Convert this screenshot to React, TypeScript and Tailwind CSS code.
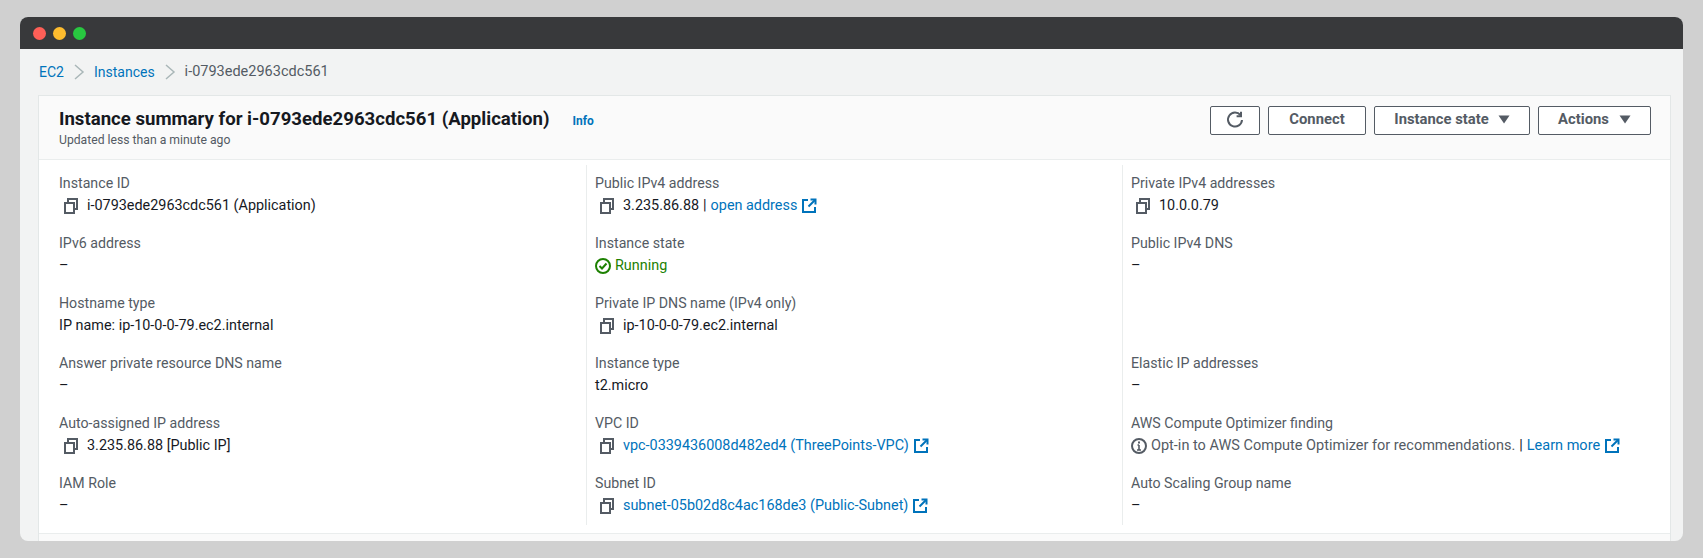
import React from "react";

const CopyIcon = () => (
  <svg width="16" height="16" viewBox="0 0 16 16" fill="none" stroke="#545b64" strokeWidth="2" className="shrink-0">
    <rect x="2" y="5" width="9" height="10" />
    <path d="M5 5V1h9v10h-3" />
  </svg>
);

const ExternalIcon = () => (
  <svg width="16" height="16" viewBox="0 0 16 16" fill="none" stroke="#0073bb" strokeWidth="2" className="ml-[4px] inline-block shrink-0">
    <path d="M7 2H2v12h12V9" />
    <path d="M9.5 1.5h5v5" />
    <path d="M14 2L7.5 8.5" />
  </svg>
);

const CheckCircle = () => (
  <svg width="16" height="16" viewBox="0 0 16 16" fill="none" stroke="#1d8102" strokeWidth="2" className="shrink-0">
    <circle cx="8" cy="8" r="7" />
    <path d="M4.5 8l2.5 2.5 4.5-5" />
  </svg>
);

const InfoCircle = () => (
  <svg width="16" height="16" viewBox="0 0 16 16" fill="none" stroke="#545b64" strokeWidth="2" className="shrink-0">
    <circle cx="8" cy="8" r="7" />
    <path d="M8 7v5M6 12h4M6.5 7H8" strokeWidth="1.6" />
    <path d="M8 3.4v2" />
  </svg>
);

const Chevron = () => (
  <svg width="12" height="18" viewBox="0 0 12 18" fill="none" stroke="#aab7b8" strokeWidth="1.5" className="shrink-0">
    <path d="M2 2l8 7-8 7" />
  </svg>
);

const Caret = () => (
  <svg width="12" height="9" viewBox="0 0 12 9" fill="#545b64" className="shrink-0">
    <path d="M0.5 0.5h11L6 8.5z" />
  </svg>
);

const RefreshIcon = () => (
  <svg width="18" height="18" viewBox="0 0 18 18" fill="none" stroke="#545b64" strokeWidth="2">
    <path d="M14.5 4.2A7 7 0 1 0 16 9" />
    <path d="M15 0.8v4.4h-4.4" />
  </svg>
);

const Link = ({ children }: { children: React.ReactNode }) => (
  <span className="text-[#0073bb]">{children}</span>
);

const CopyValue = ({ children }: { children: React.ReactNode }) => (
  <div className="flex items-center pl-[4px] text-[14.4px] text-[#16191f]">
    <CopyIcon />
    <span className="ml-[8px] flex items-center whitespace-nowrap">{children}</span>
  </div>
);

interface FieldProps {
  label?: string;
  children?: React.ReactNode;
}

const Field = ({ label, children }: FieldProps) => (
  <div className="h-[44px] leading-[22px]">
    {label && <div className="h-[22px] text-[14.2px] leading-[20px] text-[#545b64]">{label}</div>}
    {children}
  </div>
);

const Dash = () => <div className="text-[#16191f]">–</div>;

const Button = ({ children, className }: { children: React.ReactNode; className: string }) => (
  <button className={`flex h-[29px] items-center justify-center rounded-[2px] border border-[#545b64] bg-white pb-[2px] text-[14.8px] font-bold text-[#545b64] ${className}`}>
    {children}
  </button>
);

export default function App() {
  return (
    <div className="h-screen overflow-hidden bg-[#d0d0d0] pt-[17px] pl-[20px] pr-[20px] font-['Roboto',sans-serif] text-[14.4px]">
      <div className="flex h-[524px] flex-col overflow-hidden rounded-[8px] bg-[#f2f3f3]">
        <div className="flex h-[32px] shrink-0 items-center gap-[7px] bg-[#38393b] pl-[13px]">
          <span className="h-[13px] w-[13px] rounded-full bg-[#fe5f57]" />
          <span className="h-[13px] w-[13px] rounded-full bg-[#febc2e]" />
          <span className="h-[13px] w-[13px] rounded-full bg-[#28c840]" />
        </div>

        <div className="flex h-[46px] shrink-0 items-center pl-[19px] text-[#545b64]">
          <span className="text-[14px]"><Link>EC2</Link></span>
          <span className="mx-[9px]"><Chevron /></span>
          <span className="text-[14px]"><Link>Instances</Link></span>
          <span className="mx-[9px]"><Chevron /></span>
          <span className="text-[14.5px]">i-0793ede2963cdc561</span>
        </div>

        <div className="ml-[18px] mr-[12px] flex-1 border-x border-t border-[#e3e7e7] bg-white">
          <div className="flex h-[64px] items-start justify-between border-b border-[#eaeded] bg-[#fafafa] pl-[20px] pr-[19px]">
            <div className="pt-[11px]">
              <div className="flex items-baseline">
                <h1 className="text-[18.6px] leading-[24px] font-bold text-[#16191f]">
                  Instance summary for i-0793ede2963cdc561 (Application)
                </h1>
                <span className="ml-[23px] text-[12px] font-bold text-[#0073bb]">Info</span>
              </div>
              <div className="text-[12.2px] leading-[18px] text-[#545b64]">Updated less than a minute ago</div>
            </div>
            <div className="flex gap-[8px] pt-[10px]">
              <Button className="w-[50px]"><RefreshIcon /></Button>
              <Button className="w-[98px]">Connect</Button>
              <Button className="w-[156px] gap-[9px]">Instance state <Caret /></Button>
              <Button className="w-[113px] gap-[10px]">Actions <Caret /></Button>
            </div>
          </div>

          <div className="grid grid-cols-[547px_536px_1fr] pt-[5px]">
            <div className="flex flex-col gap-[16px] py-[8px] pl-[20px]">
              <Field label="Instance ID"><CopyValue>i-0793ede2963cdc561 (Application)</CopyValue></Field>
              <Field label="IPv6 address"><Dash /></Field>
              <Field label="Hostname type"><div className="text-[#16191f]">IP name: ip-10-0-0-79.ec2.internal</div></Field>
              <Field label="Answer private resource DNS name"><Dash /></Field>
              <Field label="Auto-assigned IP address"><CopyValue>3.235.86.88 [Public IP]</CopyValue></Field>
              <Field label="IAM Role"><Dash /></Field>
            </div>

            <div className="flex flex-col gap-[16px] border-l border-[#eaeded] py-[8px] pl-[8px]">
              <Field label="Public IPv4 address">
                <CopyValue>3.235.86.88<span className="mx-[4px]">|</span><Link>open address</Link><ExternalIcon /></CopyValue>
              </Field>
              <Field label="Instance state">
                <div className="flex items-center gap-[4px] text-[#1d8102]"><CheckCircle />Running</div>
              </Field>
              <Field label="Private IP DNS name (IPv4 only)"><CopyValue>ip-10-0-0-79.ec2.internal</CopyValue></Field>
              <Field label="Instance type"><div className="text-[#16191f]">t2.micro</div></Field>
              <Field label="VPC ID"><CopyValue><Link>vpc-0339436008d482ed4 (ThreePoints-VPC)</Link><ExternalIcon /></CopyValue></Field>
              <Field label="Subnet ID"><CopyValue><Link>subnet-05b02d8c4ac168de3 (Public-Subnet)</Link><ExternalIcon /></CopyValue></Field>
            </div>

            <div className="flex flex-col gap-[16px] border-l border-[#eaeded] py-[8px] pl-[8px]">
              <Field label="Private IPv4 addresses"><CopyValue>10.0.0.79</CopyValue></Field>
              <Field label="Public IPv4 DNS"><Dash /></Field>
              <Field />
              <Field label="Elastic IP addresses"><Dash /></Field>
              <Field label="AWS Compute Optimizer finding">
                <div className="flex items-center whitespace-nowrap text-[14.5px] text-[#545b64]">
                  <InfoCircle />
                  <span className="ml-[4px]">Opt-in to AWS Compute Optimizer for recommendations.</span>
                  <span className="mx-[4px] text-[#16191f]">|</span>
                  <Link>Learn more</Link>
                  <ExternalIcon />
                </div>
              </Field>
              <Field label="Auto Scaling Group name"><Dash /></Field>
            </div>
          </div>

          <div className="mt-[8px] h-[40px] border-t border-[#eaeded] bg-[#fafafa]" />
        </div>
      </div>
    </div>
  );
}
